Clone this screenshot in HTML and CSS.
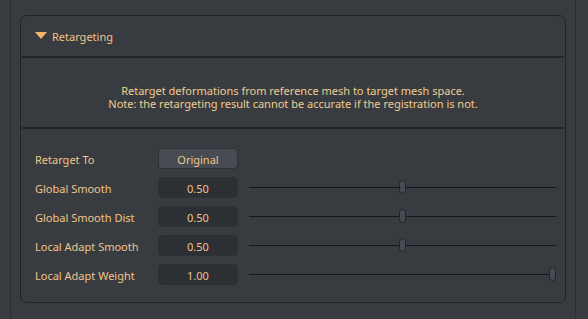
FILE: index.html
```html
<!DOCTYPE html>
<html>
<head>
<meta charset="utf-8">
<link rel="stylesheet" href="styles.css">
</head>
<body>
<div class="frame">
  <div class="panel">
    <div class="header">
      <span class="tri"></span>
      <span class="title">Retargeting</span>
    </div>
    <div class="sep"></div>
    <div class="desc">
      <div>Retarget deformations from reference mesh to target mesh space.</div>
      <div>Note: the retargeting result cannot be accurate if the registration is not.</div>
    </div>
    <div class="sep"></div>
    <div class="rows">
      <div class="row">
        <span class="label">Retarget To</span>
        <span class="btn">Original</span>
      </div>
      <div class="row">
        <span class="label">Global Smooth</span>
        <span class="val">0.50</span>
        <div class="slider"><div class="track"></div><div class="handle" style="left:50%"></div></div>
      </div>
      <div class="row">
        <span class="label">Global Smooth Dist</span>
        <span class="val">0.50</span>
        <div class="slider"><div class="track"></div><div class="handle" style="left:50%"></div></div>
      </div>
      <div class="row">
        <span class="label">Local Adapt Smooth</span>
        <span class="val">0.50</span>
        <div class="slider"><div class="track"></div><div class="handle" style="left:50%"></div></div>
      </div>
      <div class="row">
        <span class="label">Local Adapt Weight</span>
        <span class="val">1.00</span>
        <div class="slider"><div class="track"></div><div class="handle" style="left:100%"></div></div>
      </div>
    </div>
  </div>
</div>
</body>
</html>
```
FILE: styles.css
```css
html, body {
  margin: 0;
  padding: 0;
  background: #383c40;
  width: 588px;
  height: 319px;
  overflow: hidden;
  font-family: "Noto Sans", sans-serif;
  font-size: 11px;
}
.frame {
  margin-left: 10px;
  width: 566px;
  height: 319px;
  border-left: 1px solid #2b2e32;
  border-right: 1px solid #2b2e32;
  padding: 15px 9px 0 9px;
  box-sizing: border-box;
}
.panel {
  border: 1px solid #222528;
  border-radius: 7px;
  height: 288px;
  box-sizing: border-box;
}
.header {
  height: 40px;
  display: flex;
  align-items: center;
  padding-left: 14px;
  padding-top: 1px;
  box-sizing: border-box;
}
.tri {
  width: 0;
  height: 0;
  border-left: 6.5px solid transparent;
  border-right: 6.5px solid transparent;
  border-top: 7px solid #f5b46a;
  margin-right: 5px;
  margin-top: -3px;
}
.title {
  color: #f0c48a;
}
.sep {
  height: 2px;
  background: #222528;
  margin: 0 1px;
}
.desc {
  height: 69px;
  display: flex;
  flex-direction: column;
  align-items: center;
  justify-content: center;
  color: #f0cc8e;
  line-height: 13px;
  padding-top: 8px;
  box-sizing: border-box;
}
.rows {
  padding: 19px 0 0 14px;
  display: flex;
  flex-direction: column;
  gap: 8px;
}
.row {
  height: 21px;
  display: flex;
  align-items: center;
}
.label {
  width: 123px;
  color: #f0c48a;
  padding-top: 1px;
}
.btn, .val {
  width: 80px;
  height: 21px;
  box-sizing: border-box;
  border-radius: 4px;
  display: flex;
  align-items: center;
  justify-content: center;
  color: #f0c48a;
  padding-top: 1px;
}
.btn {
  background: #474c52;
  border: 1px solid #2c2f33;
}
.val {
  background: #2c2f33;
  border: 1px solid #2e3135;
}
.slider {
  position: relative;
  margin-left: 11px;
  width: 300px;
  height: 21px;
  margin-right: 7px;
}
.track {
  position: absolute;
  left: 0;
  right: -7px;
  top: 10px;
  height: 1px;
  background: #16181a;
}
.handle {
  position: absolute;
  top: 3px;
  width: 7px;
  height: 14px;
  box-sizing: border-box;
  border: 1px solid #202326;
  border-radius: 4px;
  background: #454b52;
}
```
